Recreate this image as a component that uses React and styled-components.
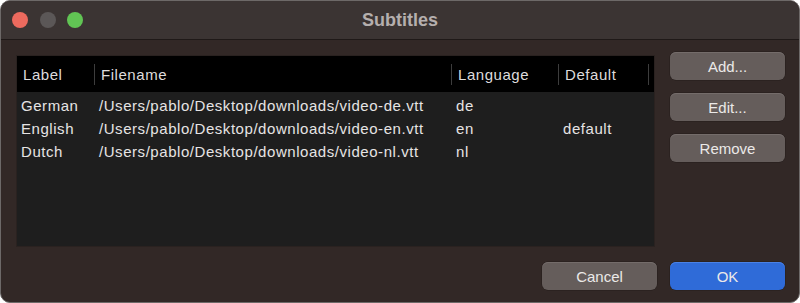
import React from "react";
import styled, { createGlobalStyle } from "styled-components";

const GlobalStyle = createGlobalStyle`
  html, body {
    margin: 0;
    padding: 0;
    background: #ffffff;
  }
  * {
    box-sizing: border-box;
  }
`;

const Window = styled.div`
  width: 800px;
  height: 303px;
  display: flex;
  flex-direction: column;
  background: #322826;
  border: 1px solid #6d6968;
  border-radius: 10px;
  overflow: hidden;
  font-family: "Liberation Sans", Arial, sans-serif;
  color: #e4e2e1;
`;

const TitleBar = styled.div`
  height: 39px;
  flex-shrink: 0;
  display: grid;
  grid-template-columns: 1fr auto 1fr;
  align-items: center;
  padding-left: 11px;
  background: #3b3433;
  border-bottom: 1px solid #1f1918;
`;

const Lights = styled.div`
  display: flex;
  gap: 11.5px;
`;

const Light = styled.span`
  width: 16px;
  height: 16px;
  border-radius: 50%;
  background: ${(p) => p.$color};
`;

const Title = styled.div`
  font-size: 18px;
  font-weight: bold;
  color: #b5afae;
  padding-right: 11px;
`;

const Body = styled.div`
  flex: 1;
  display: flex;
  flex-direction: column;
  padding: 12px 14px 12px 16px;
`;

const Main = styled.div`
  display: grid;
  grid-template-columns: 637px 115px;
  column-gap: 16px;
  align-items: start;
`;

const Table = styled.div`
  margin-top: 4px;
  height: 190px;
  background: #1e1e1e;
  box-shadow: 0 0 0 1px #2a2220;
  display: flex;
  flex-direction: column;
  letter-spacing: 0.55px;
`;

const Cols = "78px 357px 107px 90px 5px";

const HeadRow = styled.div`
  height: 36px;
  background: #000;
  display: grid;
  grid-template-columns: ${Cols};
  align-items: center;
`;

const HeadCell = styled.div`
  position: relative;
  height: 100%;
  display: flex;
  align-items: center;
  padding-left: 6px;
  font-size: 15px;
  color: #dedcdc;

  &::before {
    content: "";
    display: ${(p) => (p.$first ? "none" : "block")};
    position: absolute;
    left: -1px;
    top: 8px;
    bottom: 7px;
    width: 1px;
    background: #3d3d3d;
  }
`;

const Rows = styled.div`
  padding-top: 2px;
`;

const Row = styled.div`
  height: 23px;
  display: grid;
  grid-template-columns: ${Cols};
  align-items: center;
`;

const Cell = styled.div`
  padding-left: 4px;
  font-size: 15px;
  color: #e6e4e4;
  white-space: nowrap;
`;

const SideButtons = styled.div`
  display: flex;
  flex-direction: column;
  gap: 13px;
`;

const Button = styled.button`
  height: 28px;
  width: 115px;
  border: none;
  border-radius: 6px;
  font-family: "Liberation Sans", Arial, sans-serif;
  font-size: 15px;
  color: #ebe9e8;
  background: ${(p) => (p.$primary ? "#2f6bd8" : "#655d5b")};
  box-shadow: inset 0 1px 0 ${(p) => (p.$primary ? "#4a82e6" : "#746c6a")},
    0 0 0 0.5px #241c1b;
  padding: 0;
`;

const Footer = styled.div`
  margin-top: 16px;
  display: flex;
  justify-content: flex-end;
  gap: 13px;
`;

const columns = ["Label", "Filename", "Language", "Default", ""];

const subtitles = [
  { label: "German", file: "/Users/pablo/Desktop/downloads/video-de.vtt", lang: "de", def: "" },
  { label: "English", file: "/Users/pablo/Desktop/downloads/video-en.vtt", lang: "en", def: "default" },
  { label: "Dutch", file: "/Users/pablo/Desktop/downloads/video-nl.vtt", lang: "nl", def: "" },
];

const App = () => {
  return (
    <>
      <GlobalStyle />
      <Window>
        <TitleBar>
          <Lights>
            <Light $color="#ec6a5e" />
            <Light $color="#5b5757" />
            <Light $color="#61c554" />
          </Lights>
          <Title>Subtitles</Title>
          <div />
        </TitleBar>
        <Body>
          <Main>
            <Table>
              <HeadRow>
                {columns.map((c, i) => (
                  <HeadCell key={i} $first={i === 0}>
                    {c}
                  </HeadCell>
                ))}
              </HeadRow>
              <Rows>
                {subtitles.map((s) => (
                  <Row key={s.label}>
                    <Cell>{s.label}</Cell>
                    <Cell>{s.file}</Cell>
                    <Cell>{s.lang}</Cell>
                    <Cell>{s.def}</Cell>
                    <Cell />
                  </Row>
                ))}
              </Rows>
            </Table>
            <SideButtons>
              <Button>Add...</Button>
              <Button>Edit...</Button>
              <Button>Remove</Button>
            </SideButtons>
          </Main>
          <Footer>
            <Button>Cancel</Button>
            <Button $primary>OK</Button>
          </Footer>
        </Body>
      </Window>
    </>
  );
};

export default App;
